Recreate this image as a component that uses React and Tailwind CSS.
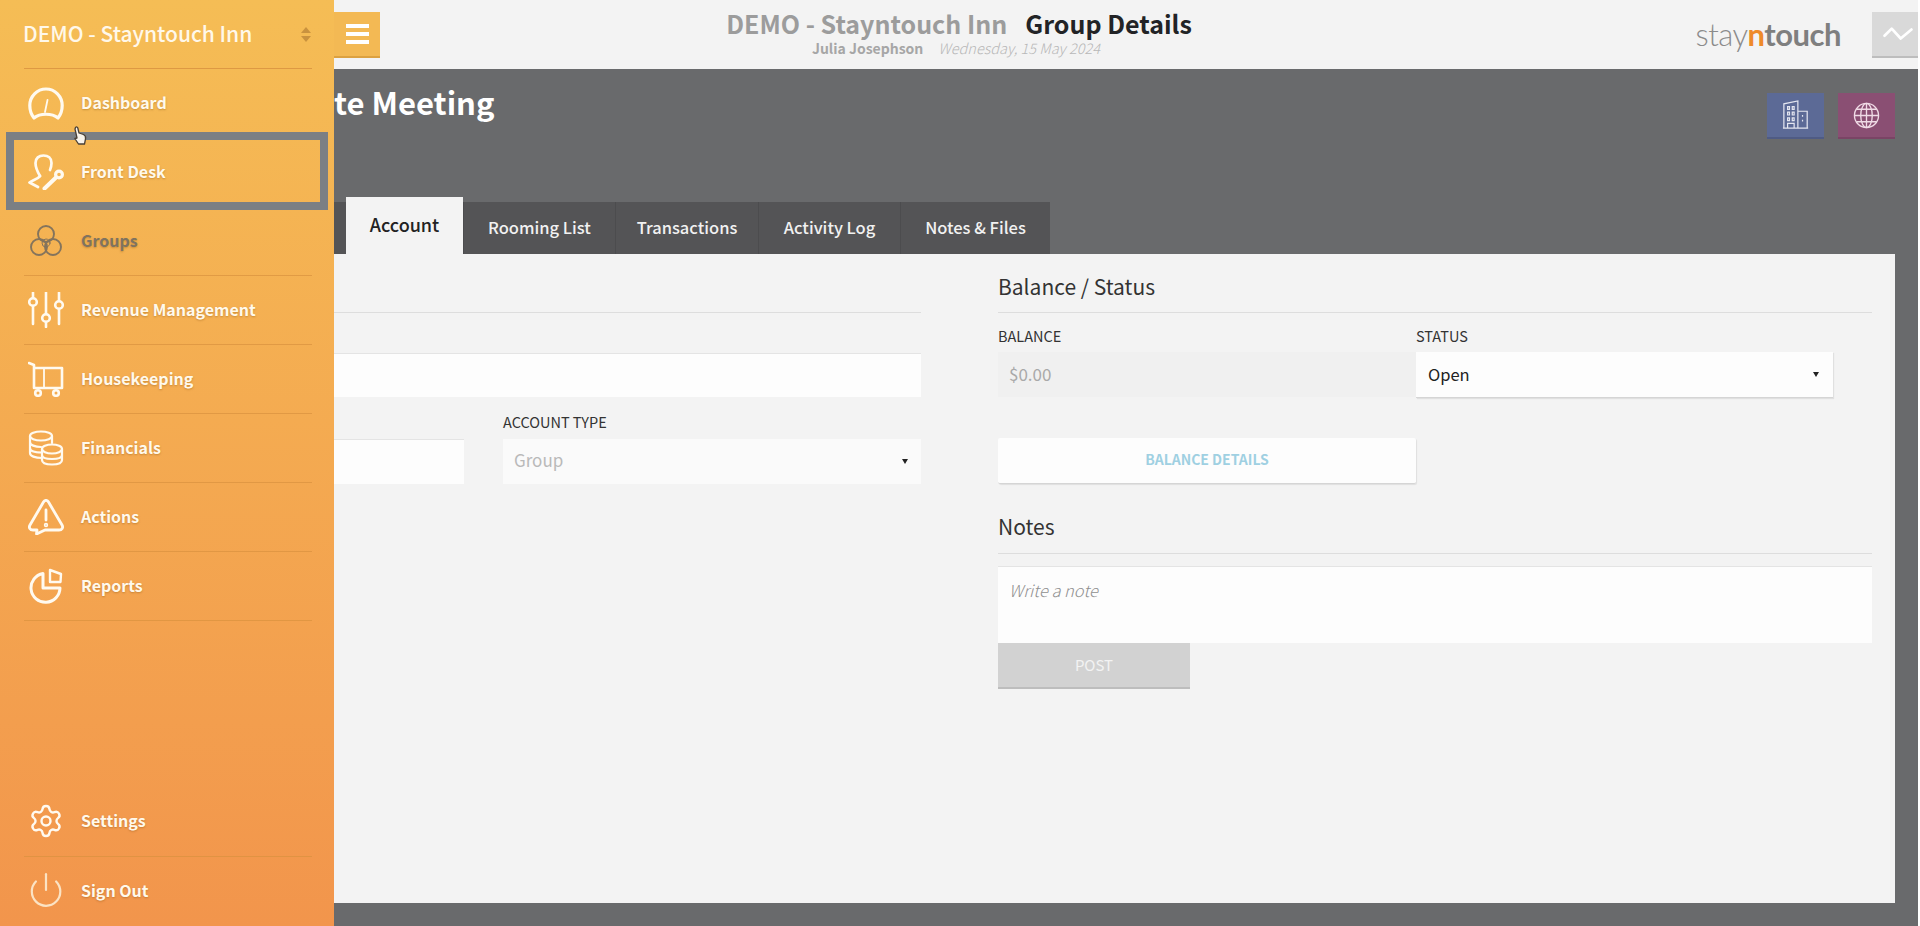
import React from "react";
import { Settings, Power } from "lucide-react";

const W = "#fffaf0";
const ic = { fill: "none", stroke: W, strokeWidth: 2.4, strokeLinecap: "round", strokeLinejoin: "round" };

function Svg({ children, color, sw }) {
  return (
    <svg viewBox="0 0 36 36" className="w-[36px] h-[36px]" {...ic} stroke={color || W} strokeWidth={sw || 2.4}>
      {children}
    </svg>
  );
}
const icons = {
  dash: (
    <Svg sw={3.2}>
      <path d="M6 33 C2.800 29 1.800 25 1.800 20.500 A16.200 16.500 0 0 1 34.200 20.500 C34.200 25 33.200 29 30 33 C24 28 12 28 6 33 Z" />
      <path d="M17 27 L19.500 15" strokeWidth={1.8} />
    </Svg>
  ),
  desk: (
    <Svg sw={2.7}>
      <path d="M12 22 C9 17 7.500 12 7.500 9 C7.500 4 11 1.500 15.500 1.500 C20 1.500 23.500 4 23.500 9 C23.500 11 23 13.500 22 16" />
      <path d="M12 22 C10 25 5 26 1.500 28.500 L10 33" />
      <circle cx="31" cy="20.500" r="3.400" fill="none" strokeWidth={3.2} />
      <path d="M28 23.500 L16.500 34.500" strokeWidth={4} />
    </Svg>
  ),
  groups: (
    <Svg color="#84745c" sw={1.9}>
      <circle cx="18" cy="11" r="8" />
      <circle cx="11" cy="24" r="8" />
      <circle cx="25" cy="24" r="8" />
      <circle cx="18" cy="20" r="4" strokeWidth={1} />
    </Svg>
  ),
  rev: (
    <Svg sw={2.6}>
      <path d="M5 0.500 V6 M5 14 V32" />
      <circle cx="5" cy="10" r="3.800" />
      <path d="M18 0.500 V22 M18 30 V35" />
      <circle cx="18" cy="26" r="3.800" />
      <path d="M31 0.500 V9 M31 17 V32" />
      <circle cx="31" cy="13" r="3.800" />
    </Svg>
  ),
  house: (
    <Svg sw={2.6}>
      <path d="M1 2 L6 4 V27 H34 V7 H6" />
      <path d="M16 7 V27" strokeWidth={1.8} />
      <circle cx="10" cy="32" r="2.800" />
      <circle cx="28" cy="32" r="2.800" />
    </Svg>
  ),
  fin: (
    <Svg sw={2.2}>
      <ellipse cx="13" cy="6" rx="11" ry="4.500" />
      <path d="M2 6 V23 C2 26 7 28 14 28 M2 12 C2 15 7 17 13 17 M2 18 C2 21 7 22.500 14 22.500 M24 6 V13" />
      <ellipse cx="24" cy="19" rx="10" ry="4.500" />
      <path d="M14 19 V30 C14 33 18 34.500 24 34.500 C30 34.500 34 33 34 30 V19 M14 25 C14 28 18 29 24 29 C30 29 34 28 34 25" />
    </Svg>
  ),
  act: (
    <Svg sw={2.8}>
      <path d="M15.500 3 C16.800 0.800 19.200 0.800 20.500 3 L34 26 C35.500 28.500 34 31 31 31 H17 L8.500 35 L9 31 H5 C2 31 0.500 28.500 2 26 Z" />
      <path d="M18 11 V21" />
      <circle cx="18" cy="26" r="0.800" />
    </Svg>
  ),
  rep: (
    <Svg sw={3}>
      <path d="M15 5.500 A14.500 14.500 0 1 0 32 20 H15 Z" />
      <path d="M22 2 L33 6 L32.500 14 H22 Z" strokeWidth={2.4} />
    </Svg>
  ),
};

function Row({ icon, label, muted, last, bottom }) {
  return (
    <div className={`ml-[24px] mr-[22px] h-[69px] shrink-0 flex items-center ${bottom ? "pb-[3px]" : ""} ${last ? "" : "border-b border-[#d8913f]/70"}`}>
      <div className="w-[57px] pl-[4px] shrink-0 flex items-center">{icon}</div>
      <span
        className={`text-[16px] leading-[24px] font-semibold ${bottom ? "-mt-[1px]" : "-mt-[2px]"} [text-shadow:0_1px_2px_rgba(120,70,10,0.35)] ${muted ? "text-[#7f7360]" : "text-[#fff9ec]"}`}
      >
        {label}
      </span>
    </div>
  );
}

function Sidebar() {
  return (
    <aside className="absolute left-0 top-0 h-[926px] w-[334px] flex flex-col bg-gradient-to-b from-[#f5bd55] to-[#f2954c]">
      <div className="ml-[24px] mr-[22px] h-[69px] shrink-0 flex items-center justify-between border-b border-[#d8913f]/80">
        <span className="text-[21px] leading-[28px] font-medium text-[#fff8ea] -mt-[3px] -ml-[1px]">DEMO - Stayntouch Inn</span>
        <span className="flex flex-col gap-[3px] pr-[1px]">
          <span className="w-0 h-0 border-x-[5px] border-x-transparent border-b-[6px] border-b-[#c9923f]" />
          <span className="w-0 h-0 border-x-[5px] border-x-transparent border-t-[6px] border-t-[#c9923f]" />
        </span>
      </div>
      <Row icon={icons.dash} label="Dashboard" />
      <Row icon={icons.desk} label="Front Desk" />
      <Row icon={icons.groups} label="Groups" muted />
      <Row icon={icons.rev} label="Revenue Management" />
      <Row icon={icons.house} label="Housekeeping" />
      <Row icon={icons.fin} label="Financials" />
      <Row icon={icons.act} label="Actions" />
      <Row icon={icons.rep} label="Reports" />
      <div className="flex-1" />
      <Row bottom icon={<Settings size={36} strokeWidth={1.6} color={W} />} label="Settings" />
      <Row bottom last icon={<Power size={38} strokeWidth={1.4} color="#fbe3c4" className="-ml-[1px]" />} label="Sign Out" />

      <div className="absolute left-[6px] top-[132px] w-[322px] h-[78px] border-[8px] border-[#7b7f84]" />
      <svg viewBox="0 0 14 20" className="absolute left-[73px] top-[126px] w-[14px] h-[20px]">
        <path
          d="M2.500 1.500 C3.500 0.500 4.500 1 4.800 2 L6 7 L10.500 8.500 C12.500 9.500 13 10.500 12.500 13 L11.500 18 H5.500 L1.800 12.500 L4 12 L2 3 Z"
          fill="#f8f3ea"
          stroke="#4a4036"
          strokeWidth="1.3"
          strokeLinejoin="round"
        />
      </svg>
    </aside>
  );
}

function Header() {
  return (
    <header className="h-[69px] shrink-0 bg-[#f3f3f3] grid grid-cols-[1fr_auto_1fr] items-start">
      <div className="pl-[334px] pt-[12px]">
        <button className="w-[46px] h-[46px] bg-[#f3b954] border-b-[2px] border-[#dca140] flex flex-col items-center justify-center gap-[4px]">
          <span className="w-[23px] h-[4px] bg-white" />
          <span className="w-[23px] h-[4px] bg-white" />
          <span className="w-[23px] h-[4px] bg-white" />
        </button>
      </div>
      <div className="flex flex-col items-center pt-[8px] -ml-[2px]">
        <div className="text-[25px] leading-[30px] font-bold whitespace-nowrap">
          <span className="text-[#9c9c9c]">DEMO - Stayntouch Inn</span>
          <span className="text-[#222326] ml-[18px]">Group Details</span>
        </div>
        <div className="leading-[18px] whitespace-nowrap -ml-[6px]">
          <span className="text-[14px] font-semibold text-[#a6a6a6]">Julia Josephson</span>
          <span className="text-[14.500px] italic font-light text-[#b8b8b8] ml-[15px]">Wednesday, 15 May 2024</span>
        </div>
      </div>
      <div className="flex justify-end items-start pt-[12px]">
        <div className="font-['Lato',sans-serif] text-[31px] leading-[44px] mr-[31px] tracking-[-0.5px] whitespace-nowrap">
          <span className="font-light text-[#8b8b8b]">stay</span>
          <span className="font-bold text-[#ee8a2a]">n</span>
          <span className="font-bold text-[#7f7f7f]">touch</span>
        </div>
        <div className="w-[48px] h-[46px] bg-[#d9d9d9] border-b-[2px] border-[#bdbdbd] flex items-center justify-center pl-[3px]">
          <svg viewBox="0 0 34 20" className="w-[32px] h-[18px]" fill="none" stroke="#fff" strokeWidth="3" strokeLinejoin="round" strokeLinecap="round">
            <path d="M2 12 L10 4 L20 15 L32 5" />
          </svg>
        </div>
      </div>
    </header>
  );
}

const tabs = [
  ["Rooming List", "w-[152px]"],
  ["Transactions", "w-[143px]"],
  ["Activity Log", "w-[142px]"],
  ["Notes & Files", "w-[150px]"],
];

function Tabs() {
  return (
    <div className="h-[57px] pl-[24px] flex items-end">
      <div className="w-[322px] h-[52px] bg-[#545456]" />
      <div className="w-[117px] h-[57px] bg-[#f3f3f3] flex items-center justify-center pb-[2px] text-[18px] font-medium text-[#222]">Account</div>
      {tabs.map(([t, w]) => (
        <div key={t} className={`${w} h-[52px] bg-[#545456] border-l border-[#4c4c4e] flex items-center justify-center pb-[2px] text-[16.500px] font-medium text-[#f1f1f1]`}>
          {t}
        </div>
      ))}
    </div>
  );
}

const label = "text-[14.500px] leading-[18px] text-[#333]";
const Arrow = () => <span className="w-0 h-0 border-x-[3.500px] border-x-transparent border-t-[5px] border-t-[#222]" />;

function Panel() {
  return (
    <section className="ml-[24px] mr-[25px] h-[649px] bg-[#f3f3f3] pl-[24px] pr-[23px] grid grid-cols-[873px_874px] gap-x-[77px]">
      <div>
        <div className="h-[59px] border-b border-[#dddddd]" />
        <div className="h-[40px]" />
        <div className="h-[44px] bg-[#fdfdfd] border-t border-[#e4e4e4]" />
        <div className="grid grid-cols-[416px_1fr] gap-x-[39px]">
          <div className="pt-[42px]">
            <div className="h-[45px] bg-[#fdfdfd] border-t border-[#e4e4e4]" />
          </div>
          <div>
            <div className={`${label} h-[42px] pt-[16px]`}>ACCOUNT TYPE</div>
            <div className="h-[45px] bg-[#fafafa] flex items-center justify-between pl-[11px] pr-[13px] text-[17px] text-[#b9b9b9]">
              <span className="-mt-[4px]">Group</span>
              <Arrow />
            </div>
          </div>
        </div>
      </div>
      <div>
        <div className="h-[59px] border-b border-[#dddddd] pt-[18px] text-[21px] leading-[28px] text-[#333]">Balance / Status</div>
        <div className="grid grid-cols-[418px_417px]">
          <div>
            <div className={`${label} h-[39px] pt-[14px]`}>BALANCE</div>
            <div className="h-[45px] bg-[#f0f0f0] flex items-center pl-[11px] text-[17px] text-[#a9a9a9]">
              <span className="-mt-[1px]">$0.00</span>
            </div>
          </div>
          <div>
            <div className={`${label} h-[39px] pt-[14px]`}>STATUS</div>
            <div className="h-[46px] bg-[#fdfdfd] border-b border-[#d5d5d5] shadow-[1px_1px_1px_rgba(0,0,0,0.08)] flex items-center justify-between pl-[12px] pr-[14px] text-[16.500px] text-[#222]">
              <span className="-mt-[1px]">Open</span>
              <Arrow />
            </div>
          </div>
        </div>
        <div className="w-[418px] mt-[40px] h-[46px] bg-[#fdfdfd] border-b border-[#d5d5d5] shadow-[1px_1px_1px_rgba(0,0,0,0.08)] rounded-[2px] flex items-center justify-center pb-[2px] text-[14px] font-semibold text-[#9fd0e2]">
          BALANCE DETAILS
        </div>
        <div className="mt-[28px] pb-[13px] border-b border-[#dddddd] text-[21px] leading-[28px] text-[#333]">Notes</div>
        <div className="mt-[12px] h-[77px] bg-[#fdfdfd] border-t border-[#e4e4e4] pl-[11px] pt-[11px] text-[16.500px] leading-[24px] italic font-light text-[#8f8f8f]">Write a note</div>
        <div className="w-[192px] h-[46px] bg-[#d2d2d2] border-b-[2px] border-[#bdbdbd] flex items-center justify-center text-[15px] text-[#f3f3f3]">POST</div>
      </div>
    </section>
  );
}

export default function App() {
  return (
    <div className="relative w-[1920px] h-[926px] overflow-hidden bg-[#696a6c] font-['Noto_Sans_CJK_SC','Noto_Sans',sans-serif]">
      <Header />
      <main>
        <div className="h-[128px] pl-[334px] pr-[25px] flex justify-between items-start">
          <h1 className="pt-[13px] text-[31px] leading-[40px] font-semibold text-white">te Meeting</h1>
          <div className="flex gap-[14px] pt-[24px]">
            <div className="w-[57px] h-[46px] bg-[#5c6a96] border-b-[2px] border-[#4f5b84] flex items-center justify-center">
              <svg viewBox="0 0 30 32" className="w-[28px] h-[30px]" fill="none" stroke="#e4e6f0" strokeWidth="1.300">
                <path d="M2 30 V4 L17 1 V30 Z M17 12 H27 V30 H17 M1 30 H28" />
                <path d="M6 7 H8 V10 H6 Z M11 7 H13 V10 H11 Z M6 13 H8 V16 H6 Z M11 13 H13 V16 H11 Z M6 19 H8 V22 H6 Z M11 19 H13 V22 H11 Z M6 30 V25 H13 V30 M22 16 V18 M22 21 V23" />
              </svg>
            </div>
            <div className="w-[57px] h-[46px] bg-[#8a4f73] border-b-[2px] border-[#7a4465] flex items-center justify-center">
              <svg viewBox="0 0 28 28" className="w-[27px] h-[27px]" fill="none" stroke="#f0dbe6" strokeWidth="1.400">
                <circle cx="14" cy="14" r="12.500" />
                <ellipse cx="14" cy="14" rx="6" ry="12.500" />
                <path d="M14 1.500 V26.500 M1.500 14 H26.500 M3.500 7.500 H24.500 M3.500 20.500 H24.500" />
              </svg>
            </div>
          </div>
        </div>
        <Tabs />
        <Panel />
      </main>
      <Sidebar />
      <div className="absolute right-0 top-0 w-[2px] h-[926px] bg-white" />
    </div>
  );
}
